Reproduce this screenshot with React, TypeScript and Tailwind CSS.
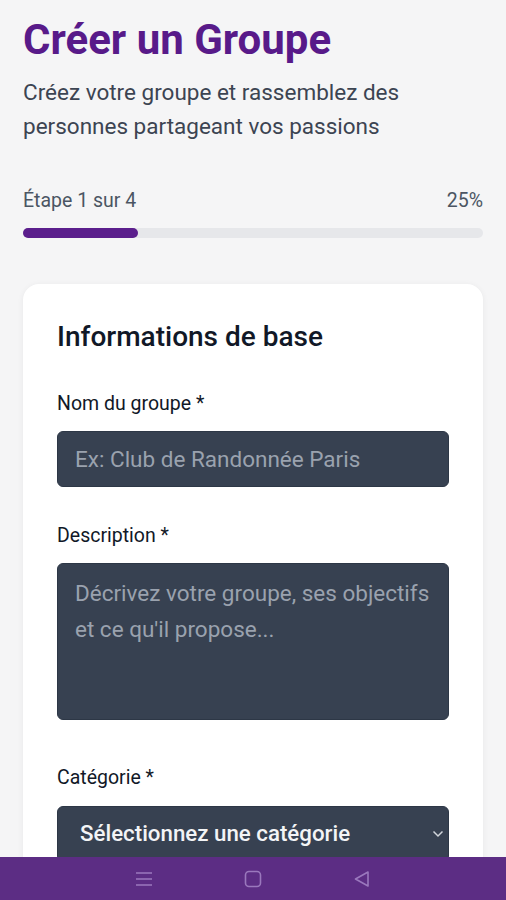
import * as React from "react";

function NavBar() {
  return (
    <div className="fixed bottom-0 left-0 right-0 h-[43px] bg-[#5c2d84] flex items-center justify-around px-[90px]">
      <svg width="20" height="18" viewBox="0 0 20 18" className="text-[#9a78bd]">
        <path d="M2 3h16M2 9h16M2 15h16" stroke="currentColor" strokeWidth="1.6" fill="none" />
      </svg>
      <svg width="20" height="20" viewBox="0 0 20 20" className="text-[#9a78bd]">
        <rect x="2.5" y="2.5" width="15" height="15" rx="3.5" stroke="currentColor" strokeWidth="1.6" fill="none" />
      </svg>
      <svg width="20" height="20" viewBox="0 0 20 20" className="text-[#9a78bd]">
        <path d="M16 3 L3.5 10 L16 17 Z" stroke="currentColor" strokeWidth="1.6" fill="none" strokeLinejoin="round" />
      </svg>
    </div>
  );
}

export default function App() {
  const step = 1;
  const total = 4;
  const pct = Math.round((step / total) * 100);

  return (
    <div className="min-h-[900px] bg-[#f5f5f6] font-['Roboto',sans-serif] px-[23px] pt-[16px] pb-[60px]">
      <h1 className="text-[42px] leading-[48px] font-bold text-[#581a89]">Créer un Groupe</h1>
      <p className="mt-[11px] pr-[40px] text-[22.5px] leading-[34px] text-[#3c4452]">
        Créez votre groupe et rassemblez des personnes partageant vos passions
      </p>

      <div className="mt-[46px] flex justify-between text-[19.5px] leading-[24px] text-[#4b5563]">
        <span>Étape {step} sur {total}</span>
        <span>{pct}%</span>
      </div>
      <div className="mt-[15px] h-[10px] w-full rounded-full bg-[#e6e7ea]">
        <div className="h-full rounded-full bg-[#5b1e8c]" style={{ width: `${pct}%` }} />
      </div>

      <div className="mt-[46px] rounded-[16px] bg-white shadow-[0_1px_6px_rgba(0,0,0,0.06)] px-[34px] pt-[35px] pb-[40px]">
        <h2 className="text-[28px] leading-[36px] font-medium text-[#111827]">Informations de base</h2>

        <label className="mt-[36px] block text-[19.5px] leading-[26px] text-[#111827]">Nom du groupe *</label>
        <input
          className="mt-[14px] block w-full h-[56px] rounded-[6px] bg-[#374151] border border-[#2d3746] px-[17px] text-[22.5px] text-white placeholder:text-[#9aa2ae] outline-none"
          placeholder="Ex: Club de Randonnée Paris"
        />

        <label className="mt-[36px] block text-[19.5px] leading-[26px] text-[#111827]">Description *</label>
        <textarea
          className="mt-[14px] block w-full h-[157px] rounded-[6px] bg-[#374151] border border-[#2d3746] px-[17px] py-[11px] text-[22.5px] leading-[36px] text-white placeholder:text-[#9aa2ae] outline-none resize-none"
          placeholder="Décrivez votre groupe, ses objectifs et ce qu'il propose..."
        />

        <label className="mt-[45px] block text-[19.5px] leading-[26px] text-[#111827]">Catégorie *</label>
        <div className="mt-[15px] flex items-center justify-between w-full h-[56px] rounded-[6px] bg-[#374151] border border-[#2d3746] pl-[22px] pr-[4px]">
          <span className="text-[22.3px] font-medium text-[#f3f4f6]">Sélectionnez une catégorie</span>
          <svg width="12" height="8" viewBox="0 0 12 8" className="text-[#d1d5db]">
            <path d="M1.5 1.5 L6 6 L10.5 1.5" stroke="currentColor" strokeWidth="1.5" fill="none" />
          </svg>
        </div>
      </div>

      <NavBar />
    </div>
  );
}
